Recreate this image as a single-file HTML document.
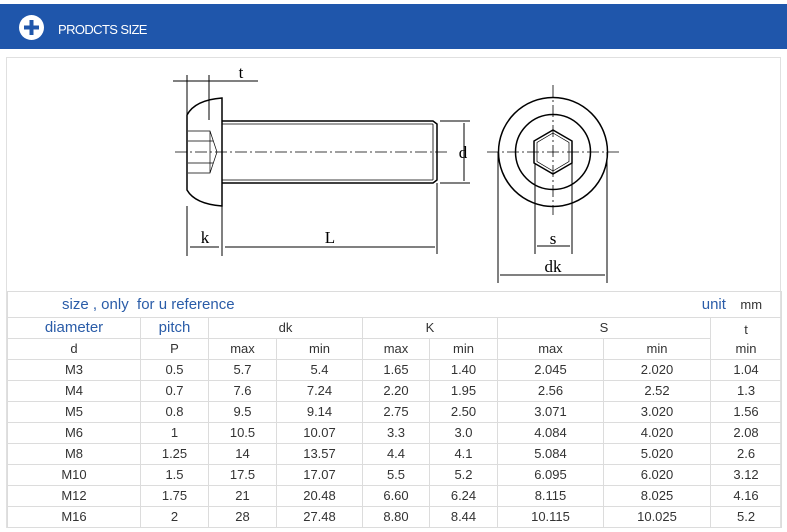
<!DOCTYPE html>
<html><head><meta charset="utf-8"><style>
*{margin:0;padding:0;box-sizing:border-box}
body{width:787px;height:532px;background:#fff;font-family:"Liberation Sans",Tahoma,sans-serif;position:relative;overflow:hidden}
.hdr{position:absolute;left:0;top:4px;width:787px;height:45px;background:#1f56ab}
.hdr .t{position:absolute;left:58px;top:18px;color:#fff;font-size:13px;letter-spacing:-0.6px}
.box{position:absolute;left:6px;top:57px;width:775px;height:471px;border:1px solid #e0e0e0;border-bottom:none}
table{position:absolute;left:7px;top:291px;border-collapse:collapse;table-layout:fixed;width:774px}
td{border:1px solid #dcdcdc;text-align:center;font-size:13px;color:#333;height:21px;padding:0;line-height:20px}
.b{color:#2a5ca8;font-size:15px}
</style></head><body>
<div class="hdr">
<svg style="position:absolute;left:19px;top:11px" width="25" height="25" viewBox="0 0 25 25"><circle cx="12.5" cy="12.5" r="12.5" fill="#fff"/><rect x="10.5" y="5" width="4" height="15" fill="#1f56ab"/><rect x="5" y="10.5" width="15" height="4" fill="#1f56ab"/></svg>
<div class="t">PRODCTS SIZE</div></div>
<div class="box"></div>
<svg style="position:absolute;left:0;top:0" width="787" height="292" viewBox="0 0 787 292" fill="none" stroke="#000" stroke-width="1">
<g font-family="Liberation Serif,serif" font-size="17" fill="#000" stroke="none" text-anchor="middle">
<text x="241" y="78">t</text><text x="463" y="158">d</text><text x="205" y="243">k</text><text x="330" y="243">L</text><text x="553" y="244">s</text><text x="553" y="272">dk</text></g>
<path d="M173 81H258M187 75V160M209 75V120"/>
<path d="M222 98Q195 100 187 115V190Q195 204 222 206Z" stroke-width="1.5"/>
<path d="M222 121H433L437 124V180L433 183H222" stroke-width="1.5"/>
<path d="M222 124H433M222 180H433M433 124V180" stroke-width="0.8"/>
<path d="M175 152H450" stroke-dasharray="12 3 2 3" stroke-width="0.8"/>
<path d="M188 131H210L217 152L210 173H188M188 141H213M188 163H213M210 131V173" stroke-width="0.7"/>
<path d="M440 121H470M440 183H470M464 123V181"/>
<path d="M187 206V256M222 206V256M437 183V254M190 247H219M225 247H435"/>
<path d="M487 152H620M553 85V215" stroke-dasharray="12 3 2 3" stroke-width="0.8"/>
<circle cx="553" cy="152" r="54.5" stroke-width="1.5"/>
<circle cx="553" cy="152" r="37.5" stroke-width="1.5"/>
<path d="M553 130L572 141V163L553 174L534 163V141Z" stroke-width="1.5"/>
<path d="M553 133L569 142.5V161.5L553 171L537 161.5V142.5Z" stroke-width="0.7"/>
<path d="M535 163V254M572 163V254M537 246H570M498 152V283M607 152V283M500 275H605"/>
</svg>
<table>
<colgroup><col style="width:133px"><col style="width:68px"><col style="width:68px"><col style="width:86px"><col style="width:67px"><col style="width:68px"><col style="width:106px"><col style="width:107px"><col style="width:71px"></colgroup>
<tr style="height:26px"><td colspan="9" style="text-align:left;border-left-color:#dcdcdc"><span class="b" style="margin-left:54px">size , only&nbsp; for u reference</span><span style="float:right;margin-right:19px"><span class="b">unit</span>&nbsp;&nbsp;&nbsp; mm</span></td></tr>
<tr><td class="b">diameter</td><td class="b">pitch</td><td colspan="2">dk</td><td colspan="2">K</td><td colspan="2">S</td><td rowspan="2" style="line-height:19px">t<br>min</td></tr>
<tr><td>d</td><td>P</td><td>max</td><td>min</td><td>max</td><td>min</td><td>max</td><td>min</td></tr>
<tr><td>M3</td><td>0.5</td><td>5.7</td><td>5.4</td><td>1.65</td><td>1.40</td><td>2.045</td><td>2.020</td><td>1.04</td></tr>
<tr><td>M4</td><td>0.7</td><td>7.6</td><td>7.24</td><td>2.20</td><td>1.95</td><td>2.56</td><td>2.52</td><td>1.3</td></tr>
<tr><td>M5</td><td>0.8</td><td>9.5</td><td>9.14</td><td>2.75</td><td>2.50</td><td>3.071</td><td>3.020</td><td>1.56</td></tr>
<tr><td>M6</td><td>1</td><td>10.5</td><td>10.07</td><td>3.3</td><td>3.0</td><td>4.084</td><td>4.020</td><td>2.08</td></tr>
<tr><td>M8</td><td>1.25</td><td>14</td><td>13.57</td><td>4.4</td><td>4.1</td><td>5.084</td><td>5.020</td><td>2.6</td></tr>
<tr><td>M10</td><td>1.5</td><td>17.5</td><td>17.07</td><td>5.5</td><td>5.2</td><td>6.095</td><td>6.020</td><td>3.12</td></tr>
<tr><td>M12</td><td>1.75</td><td>21</td><td>20.48</td><td>6.60</td><td>6.24</td><td>8.115</td><td>8.025</td><td>4.16</td></tr>
<tr><td>M16</td><td>2</td><td>28</td><td>27.48</td><td>8.80</td><td>8.44</td><td>10.115</td><td>10.025</td><td>5.2</td></tr>
</table>
</body></html>
